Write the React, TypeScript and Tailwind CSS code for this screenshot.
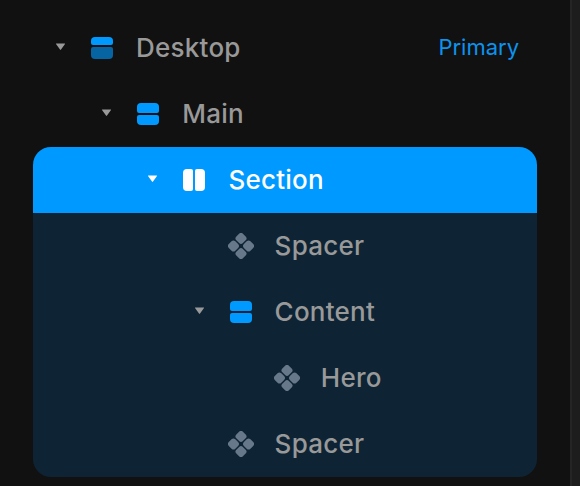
import React from 'react';
import clsx from 'clsx';

type IconType = 'breakpoint' | 'rows' | 'columns' | 'component';

interface Layer {
  id: string;
  name: string;
  icon: IconType;
  depth: number;
  expanded?: boolean;
  badge?: string;
}

const INDENT = 46.2;

const rootLayers: Layer[] = [
  { id: 'desktop', name: 'Desktop', icon: 'breakpoint', depth: 0, expanded: true, badge: 'Primary' },
  { id: 'main', name: 'Main', icon: 'rows', depth: 1, expanded: true },
];

const sectionLayers: Layer[] = [
  { id: 'section', name: 'Section', icon: 'columns', depth: 2, expanded: true },
  { id: 'spacer-top', name: 'Spacer', icon: 'component', depth: 3 },
  { id: 'content', name: 'Content', icon: 'rows', depth: 3, expanded: true },
  { id: 'hero', name: 'Hero', icon: 'component', depth: 4 },
  { id: 'spacer-bottom', name: 'Spacer', icon: 'component', depth: 3 },
];

function LayerIcon({ type }: { type: IconType }) {
  if (type === 'component') {
    return (
      <svg width="26" height="26" viewBox="0 0 26 26" className="shrink-0 fill-[#66788a]">
        <g transform="rotate(45 13 13)">
          <rect x="3" y="3" width="9.3" height="9.3" rx="2.7" />
          <rect x="13.7" y="3" width="9.3" height="9.3" rx="2.7" />
          <rect x="3" y="13.7" width="9.3" height="9.3" rx="2.7" />
          <rect x="13.7" y="13.7" width="9.3" height="9.3" rx="2.7" />
        </g>
      </svg>
    );
  }

  return (
    <svg width="26" height="26" viewBox="0 0 26 26" className="shrink-0">
      {type === 'breakpoint' && (
        <>
          <path d="M2 8V6a4 4 0 0 1 4-4h14a4 4 0 0 1 4 4v2a2 2 0 0 1-2 2H4a2 2 0 0 1-2-2z" fill="#0099ff" />
          <path d="M2 14a2 2 0 0 1 2-2h18a2 2 0 0 1 2 2v6a4 4 0 0 1-4 4H6a4 4 0 0 1-4-4z" fill="#0764a3" />
        </>
      )}
      {type === 'rows' && (
        <g fill="#0099ff">
          <path d="M2 10V6a4 4 0 0 1 4-4h14a4 4 0 0 1 4 4v4a2 2 0 0 1-2 2H4a2 2 0 0 1-2-2z" />
          <path d="M2 16a2 2 0 0 1 2-2h18a2 2 0 0 1 2 2v4a4 4 0 0 1-4 4H6a4 4 0 0 1-4-4z" />
        </g>
      )}
      {type === 'columns' && (
        <g fill="#ffffff">
          <path d="M10 2H6a4 4 0 0 0-4 4v14a4 4 0 0 0 4 4h4a2 2 0 0 0 2-2V4a2 2 0 0 0-2-2z" />
          <path d="M16 2h4a4 4 0 0 1 4 4v14a4 4 0 0 1-4 4h-4a2 2 0 0 1-2-2V4a2 2 0 0 1 2-2z" />
        </g>
      )}
    </svg>
  );
}

function LayerRow({ layer, selected = false }: { layer: Layer; selected?: boolean }) {
  return (
    <div
      className={clsx(
        'flex h-[66px] items-center pr-[18px]',
        selected ? 'bg-[#0099ff] text-white' : 'text-[#999999]'
      )}
      style={{ paddingLeft: 22 + layer.depth * INDENT }}
    >
      <svg width="11" height="8" viewBox="0 0 11 8" className="mb-[3px] shrink-0 fill-current">
        {layer.expanded && <path d="M1.3 0.5h8.4q.7 0 .3.600L6 6.600q-.5.7-1 0L1 1.100q-.4-.6.3-.6z" />}
      </svg>
      <div className="ml-[23px] flex">
        <LayerIcon type={layer.icon} />
      </div>
      <span className="ml-[21px] text-[26px] leading-8 font-medium tracking-[0.25px]">{layer.name}</span>
      {layer.badge && <span className="mb-0.5 ml-auto text-[22px] leading-7 text-[#0c93ee]">{layer.badge}</span>}
    </div>
  );
}

export default function App() {
  return (
    <div className="flex h-[486px] w-[580px] overflow-hidden bg-[#111111] font-['Inter',sans-serif]">
      <div className="w-[570px] px-[33px] pt-[15px]">
        {rootLayers.map((layer) => (
          <LayerRow key={layer.id} layer={layer} />
        ))}
        <div className="w-[504px] overflow-hidden rounded-[18px] bg-[#0e2434]">
          {sectionLayers.map((layer) => (
            <LayerRow key={layer.id} layer={layer} selected={layer.id === 'section'} />
          ))}
        </div>
      </div>
      {/* Canvas edge */}
      <div className="w-[10px] border-l-2 border-[#252525] bg-[#1d1d1d]" />
    </div>
  );
}
